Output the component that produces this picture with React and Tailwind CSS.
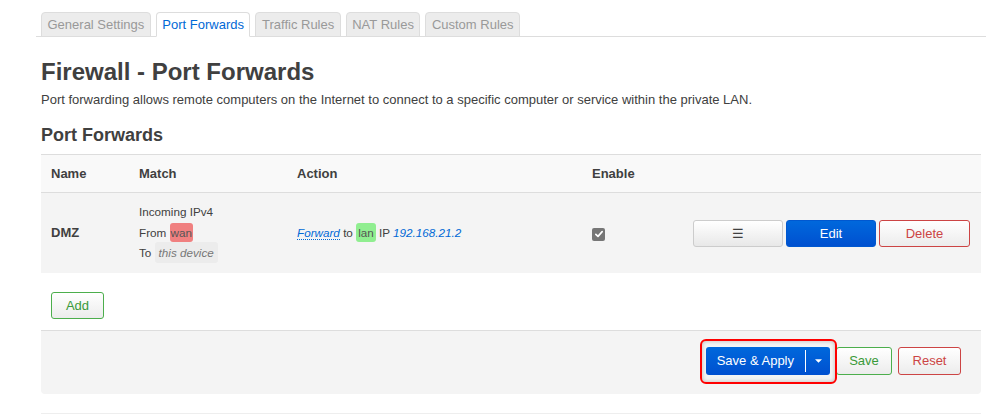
import React from "react";

const tabs = [
  { label: "General Settings" },
  { label: "Port Forwards", active: true },
  { label: "Traffic Rules" },
  { label: "NAT Rules" },
  { label: "Custom Rules" },
];

const btn =
  "h-[27px] rounded-[3px] border text-[13px] leading-[25px] text-center bg-gradient-to-b";

const Tabs = () => (
  <ul className="flex h-[25px] gap-[5px] border-b border-[#ddd] pl-[5px]">
    {tabs.map((t) => (
      <li
        key={t.label}
        className={
          t.active
            ? "-mb-px h-[25px] rounded-t-[4px] border border-[#ddd] border-b-white bg-white px-[5.5px] text-[13px] leading-[23px] text-[#0069d6]"
            : "-mb-px h-[25px] rounded-t-[4px] border border-[#ddd] bg-[#ececec] px-[5.5px] text-[13px] leading-[23px] text-[#999]"
        }
      >
        {t.label}
      </li>
    ))}
  </ul>
);

const Checkbox = () => (
  <span className="inline-flex h-[13px] w-[13px] items-center justify-center rounded-[2px] bg-[#767676]">
    <svg viewBox="0 0 12 12" className="h-[10px] w-[10px]">
      <path
        d="M2.2 6.4 L4.8 8.8 L9.8 3.2"
        fill="none"
        stroke="#fff"
        strokeWidth="2"
        strokeLinecap="round"
        strokeLinejoin="round"
      />
    </svg>
  </span>
);

export default function App() {
  return (
    <div
      className="min-h-[416px] bg-white pl-[36px] pr-[12px] pt-[12px] text-[#404040]"
      style={{ fontFamily: '"Liberation Sans", Arial, sans-serif' }}
    >
      <Tabs />

      <div className="px-[5px]">
        <h2 className="mt-[20px] text-[24px] font-bold leading-[30px] text-[#404040]">
          Firewall - Port Forwards
        </h2>
        <p className="mt-[4px] text-[13px] leading-[18px]">
          Port forwarding allows remote computers on the Internet to connect to a
          specific computer or service within the private LAN.
        </p>

        <h3 className="mt-[14px] text-[18px] font-bold leading-[24px]">
          Port Forwards
        </h3>

        {/* table */}
        <div className="mt-[7px] border-t border-[#ddd]">
          <div className="grid h-[38px] grid-cols-[88px_158px_295px_101px_1fr] items-center border-b border-[#ddd] bg-[#f9f9f9] text-[13px] font-bold">
            <div className="pl-[10px]">Name</div>
            <div className="pl-[10px]">Match</div>
            <div className="pl-[10px]">Action</div>
            <div className="pl-[10px]">Enable</div>
            <div />
          </div>
          <div className="grid h-[80px] grid-cols-[88px_158px_295px_101px_1fr] items-center bg-[#f4f4f4]">
            <div className="pl-[10px] text-[13px] font-bold">DMZ</div>
            <div className="pl-[10px] text-[11.7px] leading-[20.5px]">
              <div>Incoming IPv4</div>
              <div>
                From{" "}
                <span className="rounded-[3px] bg-[#f08080] px-[1px] py-[3px] text-[#555]">
                  wan
                </span>
              </div>
              <div>
                To{" "}
                <span className="rounded-[3px] bg-[#ececec] px-[4px] py-[4px] italic text-[#777]">
                  this device
                </span>
              </div>
            </div>
            <div className="pl-[10px] text-[11.7px]">
              <span className="border-b border-dotted border-[#0069d6] italic text-[#0069d6]">
                Forward
              </span>{" "}
              to{" "}
              <span className="rounded-[3px] bg-[#90ee90] px-[2px] py-[3px] text-[#555]">
                lan
              </span>{" "}
              IP <span className="italic text-[#0069d6]">192.168.21.2</span>
            </div>
            <div className="flex pl-[10px] pt-[2px]">
              <Checkbox />
            </div>
            <div className="flex justify-end gap-[3px] pr-[11px] pt-[1px]">
              <button className={`${btn} w-[90px] border-[#ccc] from-white to-[#e8e8e8] text-[#404040]`}>
                ☰
              </button>
              <button className={`${btn} w-[90px] border-[#0058d0] from-[#0068dc] to-[#0050d0] text-white`}>
                Edit
              </button>
              <button className={`${btn} w-[91px] border-[#c44] from-white to-[#ececec] text-[#c44]`}>
                Delete
              </button>
            </div>
          </div>
        </div>

        <div className="mt-[19px] pl-[10px]">
          <button className={`${btn} w-[53px] border-[#4cae4c] from-white to-[#ececec] text-[#3a9a3a]`}>
            Add
          </button>
        </div>

        {/* footer actions */}
        <div className="mt-[11px] flex h-[64px] items-start justify-end gap-[6px] rounded-b-[4px] border-t border-[#ddd] bg-[#f4f4f4] pr-[20px] pt-[16px]">
          <div className="relative">
            <div className="pointer-events-none absolute -left-[6px] -top-[8px] h-[45px] w-[137px] rounded-[6px] border-2 border-[#f00] shadow-[inset_0_0_4px_rgba(0,0,0,0.25)]" />
            <div className="flex h-[28px] overflow-hidden rounded-[3px] bg-gradient-to-b from-[#0068dc] to-[#0050d0] text-[13px] text-white">
              <span className="px-[11px] leading-[28px]">Save &amp; Apply</span>
              <span className="my-[3px] w-px bg-white" />
              <span className="flex w-[24px] items-center justify-center">
                <svg viewBox="0 0 8 4" className="h-[4px] w-[7px]">
                  <path d="M0 0 L8 0 L4 4 Z" fill="#fff" />
                </svg>
              </span>
            </div>
          </div>
          <button className="h-[28px] w-[56px] rounded-[3px] border border-[#4cae4c] bg-gradient-to-b from-white to-[#ececec] text-[13px] text-[#3a9a3a]">
            Save
          </button>
          <button className="h-[28px] w-[63px] rounded-[3px] border border-[#c44] bg-gradient-to-b from-white to-[#ececec] text-[13px] text-[#c44]">
            Reset
          </button>
        </div>

        <div className="mt-[19px] border-t border-[#eee]" />
      </div>
    </div>
  );
}
